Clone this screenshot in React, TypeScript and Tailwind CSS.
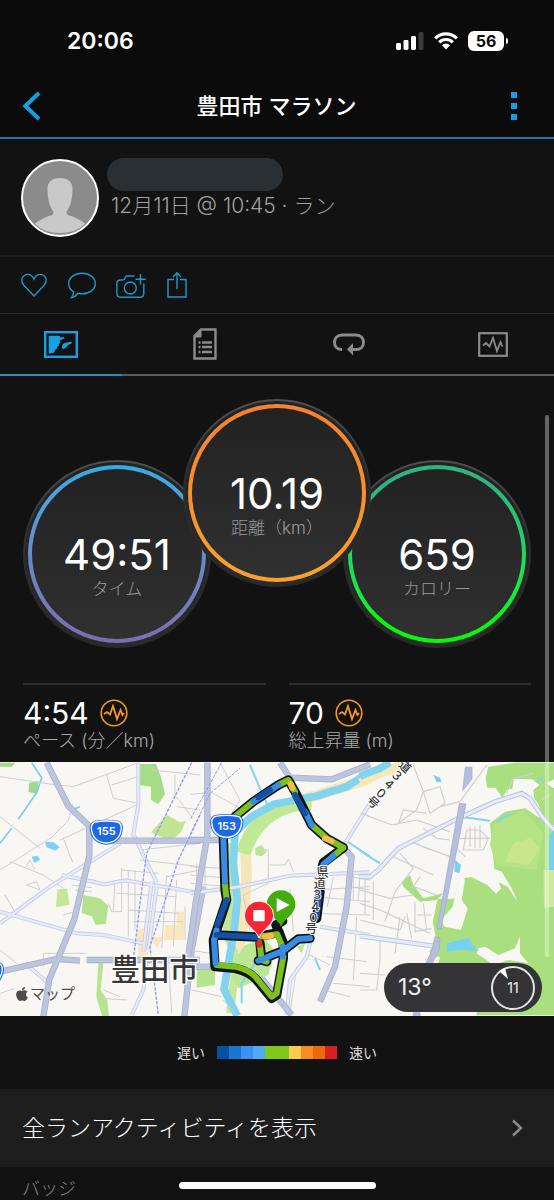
import React from 'react';
import { FaApple } from 'react-icons/fa';

const gauges = [
  {
    value: '49:51',
    label: 'タイム',
    place: 'self-end',
    ring: 'bg-linear-to-b from-[#35aae2] to-[#7d6cb0]',
  },
  {
    value: '10.19',
    label: '距離（km）',
    place: 'z-10 -mx-7 self-start',
    ring: 'bg-linear-to-b from-[#f5812e] to-[#f9a12c]',
  },
  {
    value: '659',
    label: 'カロリー',
    place: 'self-end',
    ring: 'bg-linear-to-b from-[#2fb380] from-10% to-[#0cf50c] to-85%',
  },
];

const stats = [
  { value: '4:54', label: 'ペース (分／km)' },
  { value: '70', label: '総上昇量 (m)' },
];

const paceColors = [
  'bg-[#0450a4]',
  'bg-[#1b76d3]',
  'bg-[#3b92f3]',
  'bg-[#55a9fb]',
  'bg-[#80c91c]',
  'bg-[#80c91c]',
  'bg-[#fdca4b]',
  'bg-[#fb8a22]',
  'bg-[#eb680b]',
  'bg-[#d82020]',
];

function StatusBar() {
  return (
    <div className="flex h-[82px] items-center justify-between pr-[46px] pl-[67px]">
      <span className="text-[23px] leading-8 font-semibold">20:06</span>
      <div className="flex items-center gap-[10px]">
        <svg width="28" height="18" viewBox="0 0 28 18" fill="#fff" aria-hidden="true">
          <rect x="0" y="11" width="5" height="7" rx="1.4" />
          <rect x="7.5" y="8" width="5" height="10" rx="1.4" />
          <rect x="15" y="4" width="5" height="14" rx="1.4" />
          <rect x="22.5" y="0" width="5" height="18" rx="1.4" fill="#3c3c3e" />
        </svg>
        <svg width="24" height="18" viewBox="0 0 24 18" fill="none" stroke="#fff" aria-hidden="true">
          <path d="M1.2 6.3a15.4 15.4 0 0 1 21.6 0" strokeWidth="3.2" />
          <path d="M5.2 10.3a9.7 9.7 0 0 1 13.6 0" strokeWidth="3.2" />
          <path d="M8 13.2a5.7 5.7 0 0 1 8 0L12 17.5Z" fill="#fff" stroke="none" />
        </svg>
        <div className="flex items-center gap-[2px]">
          <span className="flex h-5 w-9 items-center justify-center rounded-md bg-white text-base leading-5 font-bold text-[#0c0c0c]">
            56
          </span>
          <span className="h-[6px] w-[2px] rounded-r-full bg-white"></span>
        </div>
      </div>
    </div>
  );
}

function Header() {
  return (
    <header className="border-b-2 border-[#22789f] bg-[#0b0b0b]">
      <StatusBar />
      <div className="mb-[7px] flex h-12 items-center justify-between pr-[36px] pl-[22px]">
        <button type="button" aria-label="戻る" className="w-5">
          <svg width="19" height="30" viewBox="0 0 19 30" fill="none" stroke="#149fe4" strokeWidth="4">
            <path d="M17 2 3.4 15 17 28" />
          </svg>
        </button>
        <h1 className="text-[22px] leading-8 font-medium">豊田市 マラソン</h1>
        <button type="button" aria-label="メニュー" className="flex w-[7px] flex-col gap-[5px]">
          <span className="h-[6px] w-[6px] bg-[#149fe4]"></span>
          <span className="h-[6px] w-[6px] bg-[#149fe4]"></span>
          <span className="h-[6px] w-[6px] bg-[#149fe4]"></span>
        </button>
      </div>
    </header>
  );
}

function Profile() {
  return (
    <section className="flex gap-2 border-b-2 border-[#1e1e1e] pt-5 pb-[18px] pl-[21px]">
      <svg width="78" height="78" viewBox="0 0 78 78" role="img" aria-label="プロフィール写真">
        <defs>
          <clipPath id="avatar">
            <circle cx="39" cy="39" r="36.5" />
          </clipPath>
        </defs>
        <circle cx="39" cy="39" r="38" fill="#8b8b8b" stroke="#fff" strokeWidth="2" />
        <g clipPath="url(#avatar)" fill="#c9c9c9">
          <path d="M39 19c8.500 0 12.500 4 12.500 11 0 10-2 17-5.500 22-.8 1.500-.6 3 1 4 6 2 12 4.500 17 8.500-6 6.500-14 9.500-25 9.500s-19-3-25-9.500c5-4 11-6.500 17-8.500 1.600-1 1.800-2.500 1-4-3.500-5-5.500-12-5.500-22 0-7 4-11 12.500-11Z" />
        </g>
      </svg>
      <div className="-mt-px flex flex-col">
        <div className="h-[33px] w-[176px] rounded-full bg-[#2a2f34]"></div>
        <p className="pt-[3px] pl-1 text-[21px] leading-6 font-light text-[#a0a0a0]">
          12月11日 @ 10:45 · ラン
        </p>
      </div>
    </section>
  );
}

function SocialActions() {
  return (
    <div className="-mt-px flex h-[58px] items-center gap-5 border-b border-[#292929] px-5">
      <button type="button" aria-label="いいね">
        <svg width="28" height="28" viewBox="0 0 28 28" fill="none" stroke="#2196cf" strokeWidth="1.4">
          <path d="M14 25 4 14.5C.5 10.500 1.500 6 4.500 4.300 8.500 2.200 12.500 4 14 8c1.500-4 5.500-5.800 9.500-3.700 3 1.700 4 6.200.5 10.200Z" />
        </svg>
      </button>
      <button type="button" aria-label="コメント">
        <svg width="28" height="28" viewBox="0 0 28 28" fill="none" stroke="#2196cf" strokeWidth="1.4">
          <path d="M14 2.200c7.500 0 13.300 4.500 13.300 10.300S21.500 22.800 14 22.800c-1.500 0-3-.2-4.300-.5-1.200 2-3.400 3.900-6.200 4.300 1.500-1.600 2.200-3.500 2.100-5.800C2.500 19 .7 16 .7 12.500.7 6.700 6.500 2.200 14 2.200Z" />
        </svg>
      </button>
      <button type="button" aria-label="写真を追加">
        <svg width="30" height="28" viewBox="0 0 30 28" fill="none" stroke="#2196cf" strokeWidth="1.400">
          <path d="M18.500 5H11.500c-1.500 0-2.200.8-2.500 2.200C8.700 8.600 8 9 6.500 9H4.500C2.200 9 .9 10.300.9 12.500v10c0 2.600 1.200 3.700 3.600 3.700h19.700c2.400 0 3.600-1.100 3.600-3.700v-10" />
          <circle cx="14.300" cy="17" r="6" />
          <path d="M24.500 3v10.500M19.500 8.200h10.300" />
        </svg>
      </button>
      <button type="button" aria-label="共有">
        <svg width="22" height="28" viewBox="0 0 22 28" fill="none" stroke="#2196cf" strokeWidth="1.400">
          <path d="M8 8.500H2v17.500h18V8.500h-6" />
          <path d="M11 18V2M7 6l4-4.200L15 6" />
        </svg>
      </button>
    </div>
  );
}

function Tabs() {
  return (
    <nav className="flex h-[62px] justify-between border-b-2 border-[#5c5c5c]">
      <a
        href="#map"
        aria-label="マップ"
        className="-mb-[2px] flex w-[22%] items-center justify-center border-b-2 border-[#2b8fbd]"
      >
        <svg width="34" height="27" viewBox="0 0 34 27" fill="none">
          <rect x="1.200" y="1.200" width="31.600" height="24.600" stroke="#18a0e3" strokeWidth="2.400" />
          <path
            d="M4.700 4.700H15l1.500 1.500H20l.5 1.300L16 9.300l-.5 1 1 1.500-2 1.500.8 1.500-2.300 1 .3 1.500-2 1.500-1 2.500L8.800 22.300H4.700Z"
            fill="#18a0e3"
          />
          <path
            d="M18 16.500c0-2.500 1-4 3-4.500 2-.4 4-1.500 6-1.300 1.300.3 1.200 1.600 0 2l-2.500 1c-1.500.7-2 2.500-3.500 3.600-1.500 1-3 .8-3-.8Z"
            fill="#18a0e3"
          />
        </svg>
      </a>
      <a href="#details" aria-label="詳細" className="flex w-[22%] items-center justify-center">
        <svg width="24" height="32" viewBox="0 0 24 32" fill="none" stroke="#8b8b8b">
          <path d="M8 1.500h14.500v29h-21V8Z" strokeWidth="2.400" />
          <path d="M8 1.500v7.500H1.500Z" fill="#8b8b8b" />
          <path d="M5.500 14.500h2M5.500 19h2M5.500 24h2M9 14.500h10M9 19h10M9 24h10" strokeWidth="2.400" />
        </svg>
      </a>
      <a href="#laps" aria-label="ラップ" className="flex w-[22%] items-center justify-center">
        <svg width="32" height="23" viewBox="0 0 32 23" fill="none">
          <path
            d="M9 16.500C4.500 16.500 1.500 14 1.500 9.500S4.500 2 9 2h14c4.500 0 7.500 3 7.500 7.500s-3 7-7.500 7h-4"
            stroke="#8b8b8b"
            strokeWidth="3"
          />
          <path d="M14 16.300 20 10v12.500Z" fill="#8b8b8b" />
        </svg>
      </a>
      <a href="#charts" aria-label="チャート" className="flex w-[22%] items-center justify-center">
        <svg width="30" height="25" viewBox="0 0 30 25" fill="none" stroke="#8b8b8b">
          <rect x="1.200" y="1.200" width="27.600" height="22.600" strokeWidth="2.200" />
          <path d="m5 13.500 3-2.500 3.500 3.500L15 6l4 13 3.500-9 2 4.500" strokeWidth="1.800" />
        </svg>
      </a>
    </nav>
  );
}

function Gauges() {
  return (
    <section className="flex h-[272px] justify-center pt-[23px]">
      {gauges.map((gauge) => (
        <div
          key={gauge.label}
          className={`h-[188px] w-[188px] shrink-0 rounded-full bg-linear-to-b from-[#505050] via-[#2f2f2f] via-40% to-[#282828] p-[2px] ${gauge.place}`}
        >
          <div className="h-full rounded-full bg-linear-to-b from-[#202224] to-[#2b2b2b] p-[3px]">
            <div className={`h-full rounded-full p-[4px] ${gauge.ring}`}>
              <div className="flex h-full flex-col items-center justify-center rounded-full bg-linear-to-b from-[#222222] to-[#303030] pt-[26px]">
                <span className="text-[42px] leading-[44px]">{gauge.value}</span>
                <span className="text-[17px] leading-6 font-light text-[#999999]">{gauge.label}</span>
              </div>
            </div>
          </div>
        </div>
      ))}
    </section>
  );
}

function Stats() {
  return (
    <section className="grid grid-cols-2 gap-[23px] px-[23px] pt-[35px]">
      {stats.map((stat) => (
        <div key={stat.label} className="border-t-2 border-[#2e2e2e] pt-3 pb-[9px]">
          <div className="flex items-center gap-[11px]">
            <span className="text-[30px] leading-8">{stat.value}</span>
            <svg width="28" height="28" viewBox="0 0 28 28" fill="none" stroke="#f8991d" aria-hidden="true">
              <circle cx="14" cy="14" r="12.800" strokeWidth="1.600" />
              <path d="m4 15 3-2 3 2.500L13 7l4 13 3.500-9 2 5 1.500-2" strokeWidth="1.800" />
            </svg>
          </div>
          <p className="text-[18px] leading-6 font-light text-[#a8a8a8]">{stat.label}</p>
        </div>
      ))}
    </section>
  );
}

function Shield({ x, y, label }: { x: number; y: number; label: string }) {
  return (
    <g transform={`translate(${x} ${y})`}>
      <path d="M-36-34Q0-40 36-34Q50-28 50-12C48 18 32 36 0 38C-32 36-48 18-50-12Q-50-28-36-34Z" fill="#1f67e0" />
      <path
        d="M-34-30Q0-36 34-30Q45-26 45-12C43 14 30 31 0 33C-30 31-43 14-45-12Q-45-26-34-30Z"
        fill="#1d68e4"
        stroke="#fff"
        strokeWidth="4"
      />
      <text y="10" textAnchor="middle" fill="#fff" fontSize="33" fontWeight="600">
        {label}
      </text>
    </g>
  );
}

// Drawn at three units per pixel, in three side-by-side tiles.
function RouteMap() {
  return (
    <svg
      viewBox="0 0 1662 762"
      preserveAspectRatio="xMidYMid slice"
      className="block h-[254px] w-full"
      role="img"
      aria-label="豊田市のルート"
    >
      <rect width="1662" height="762" fill="#f8f7f3" />

      {/* west */}
      <g transform="translate(0 -6)" fill="none">
        <path d="M418 12h50l15 40 12 50-20 30-22-12V80l-35-5Z" fill="#a5dc85" />
        <path d="m500 165 40 22 18-5-15 35-30 25-60-25Z" fill="#bfe592" />
        <path d="m172 388 30-2 6 48-40 8Z" fill="#c6e896" />
        <path d="m250 405 50 10 25 22-8 55-30 2-12-25-30-10Z" fill="#b4e18d" />
        <path d="m295 605 15 5-8 80 20 30 5 50h-20l-18-60Z" fill="#b7e58f" />
        <path d="M0 8h45l-10 12H0ZM88 68l28-5-6 38-25-5Z" fill="#9fd98b" />
        <path d="M495 495h35v-40h22v85h-60ZM410 510l35-10v90h-30ZM450 530h40l-20 35Z" fill="#fbe6bd" />
        <path d="m135 245 25 2 20 15-15 10-25-10ZM95 290l18-3 8 12-18 10Z" fill="#7fd2f5" />
        <path d="m95 8 30 45-15 45-55 80M0 250l35-45M215 150l25-10" stroke="#78cdee" strokeWidth="5" />
        <g stroke="#cfcfd1" strokeWidth="3">
          <path d="M0 50 150 72 220 80l190-70M320 45l20 70 75 15M335 75l80-25M0 170l120 95M0 330l155-98 50-50 12-50M190 235l28 72M410 135 180 240M30 305l100 40 60 40M75 325l15-25 15 30M80 375l30-10 10 25-40-15M130 620v-40h130M0 570l50 40M15 405l35 60M365 325v130h-30l-10-25M385 330v200M405 330v180M345 365l-5 90M365 330l110 10M350 400l180 10M385 450l150 10M400 485h150M500 345l-15 220M530 360l-10 200M555 440v100M455 30l145 15M525 45v60l50 65M530 140l70 10M420 270l180-20M420 300l180 20M500 350l100-20M225 350l65 12M215 375l60 8M225 390l50 6M190 465l35-10M310 690l50 20M300 715l80 5M0 700l45-15M505 600l10 160M550 590v60" />
        </g>
        <g stroke="#c4cbe3" strokeWidth="12">
          <path d="M0 490 150 380l210-130M415 8v125l-15 90 70 145M0 455l230 65 80 5 120 25M185 345l130 28 60-12 225 38M455 365l-25 210M470 380l-25 190M440 600l-10 90-35 75M75 610l65 55" />
          <path
            d="M0 490 150 380l210-130M415 8v125l-15 90 70 145M0 455l230 65 80 5 120 25M185 345l130 28 60-12 225 38M455 365l-25 210M470 380l-25 190M440 600l-10 90-35 75M75 610l65 55"
            stroke="#e7eafa"
            strokeWidth="7"
          />
        </g>
        <g stroke="#a7b0ce" strokeWidth="19">
          <path d="m140 8 65 130 63 60v90l-45 190-75 180-18 112M330 242h270M0 635l170-38 70 5M260 600h340M610 380l-35 190-22 200" />
          <path
            d="m140 8 65 130 63 60v90l-45 190-75 180-18 112M330 242h270M0 635l170-38 70 5M260 600h340M610 380l-35 190-22 200"
            stroke="#bdc5de"
            strokeWidth="14"
          />
        </g>
        <path
          d="M575 8 440 280l-20 150-20 170M600 165 535 300 450 560l25 205"
          stroke="#8c9cf4"
          strokeWidth="4"
          strokeDasharray="10 4"
        />
      </g>

      {/* centre */}
      <g transform="translate(570 -6)" fill="none">
        <path d="M540 55 400 100l-120 35-80 55-35 60 5 90-10 150-40 220" stroke="#f6e7b8" strokeWidth="32" />
        <path d="M365 130c-80-5-170 35-205 150" stroke="#bfe995" strokeWidth="45" />
        <path d="m110 250 10 180-10 90 30 80-20 160" stroke="#c3e89c" strokeWidth="24" />
        <path d="m165 555 60-20 30 40-20 70-90 40-30-60Z" fill="#bbe694" />
        <path d="M20 625h55v50l-55 8Z" fill="#b5e58d" />
        <path d="m195 265 20-10 15 20-15 14-18-4ZM320 560l25-10-10 30Z" fill="#bbe694" />
        <path
          d="M540 35 470 80l-90 28-130 25-70 40-45 45-5 90 12 110-10 100-20 110-10 60 40 80"
          stroke="#82d4ee"
          strokeWidth="23"
        />
        <path d="m180 15 30 70 25 55M465 240l75 50M375 595l15 35M200 600l-45 70v60" stroke="#82d4ee" strokeWidth="6" />
        <g stroke="#cfcfd1" strokeWidth="3">
          <path d="M60 8v90l-60 5M60 95l90 50M90 8 150 120l-30 50M0 320l100 5M0 345l100 8M0 370l95 8M20 310v90M45 315v90M160 405l75-35v-100h-20M235 315h50l10-18 15 38M370 410l170 15M360 460l180 5M375 390l165-10M390 345l-15 95M410 350l-18 90M430 350l-18 90M480 350l60 10M480 380l60 10M490 340v80M510 340l-5 80M160 405l20 110M250 400v110M300 385l10 130M320 620l-20 140M350 580l70 35M410 590l120 15M500 470l-10 190M400 690l80 20M430 670l110 10M0 570l60 10M5 690l90 20M100 720l40 45" />
        </g>
        <path
          d="M0 400 150 380l150-33 240-10M390 500l150 25M370 510l-20 80-50 70-10 105M540 130l-75 120"
          stroke="#c4cbe3"
          strokeWidth="12"
        />
        <path
          d="M0 400 150 380l150-33 240-10M390 500l150 25M370 510l-20 80-50 70-10 105M540 130l-75 120"
          stroke="#e7eafa"
          strokeWidth="7"
        />
        <path
          d="M52 8v220l-35 200-25 180M0 240h100M270 8l30 45 125 5 115-45M455 255l30 35-15 150-35 180-45 105M215 655l90 110M0 620h80"
          stroke="#a7b0ce"
          strokeWidth="19"
        />
        <path
          d="M52 8v220l-35 200-25 180M0 240h100M270 8l30 45 125 5 115-45M455 255l30 35-15 150-35 180-45 105M215 655l90 110M0 620h80"
          stroke="#bdc5de"
          strokeWidth="14"
        />
        <path d="M0 225 60 100l90-75M95 8 0 180" stroke="#8c9cf4" strokeWidth="3" strokeDasharray="10 4" />
      </g>

      {/* east */}
      <g transform="translate(1080 -6)" fill="none">
        <path d="m385 20 80-12h117v50l-40 20-25-20-55-2-5 30-15 2-15 25-20-30h-25l-5-30Z" fill="#a9df7e" />
        <path d="m520 90 30-25 32 20v110l-35 5-10-65-15-20Z" fill="#a9df7e" />
        <path
          d="m390 190 45-35 60-10 45 30 42 30v561H200l-5-30 25-120-12-45 25-15-15-70 15-70h50l15-60 35-5 50 25 25 25 15-15-20-60Z"
          fill="#a9df7e"
        />
        <path d="M180 590h60l-10 40 120 100v40H180Z" fill="#f8f7f3" />
        <path d="m400 195 90-45 60 70-20 110-120-15-20-60Z" fill="#b6e383" />
        <path d="m460 250 50-15 30 30-35 50-70-10Z" fill="#cbe58a" />
        <path d="m125 365 25-20 10 30 30 40 60-15-20 20-50 5-50-45Z" fill="#a9df7e" />
        <path
          d="m300 340 15 20-10 60 18 25-20 65-50-10-10-20 35-40ZM305 295l60-15 20 40 40 15 30 50 18 40-30-45-40-20-70-60ZM355 565l20-5 40 25 50-20 15-35v50l25 30-60-10-45 15-50-35Z"
          fill="#f8f7f3"
        />
        <path
          d="m260 550 30-8 35-8 15 25 15 15-45-5-50 5ZM285 300l18 15-5 25-15-5ZM568 225l14-15v120l-16 5ZM220 45l20 8 5 12-15 2Z"
          fill="#77d0ef"
        />
        <path d="M550 330h32v110l-30 5Z" fill="#cde99a" />
        <path d="M0 68 60 40l90-32" stroke="#f6e7b8" strokeWidth="26" />
        <path d="M0 48 60 25l30-18" stroke="#82d4ee" strokeWidth="22" />
        <path d="m310 172 80 10M410 188l22-18 20-8M530 65l20-12M0 272l60 38" stroke="#82d4ee" strokeWidth="6" />
        <g stroke="#cfcfd1" strokeWidth="3.500">
          <path d="M160 15l30 80 50-15 15 50-45 30-20-65-20 55-55 40 15-40 70 10M5 160l90 35 75-15 100 35M380 15l-80 110-60 15M190 205l40 30 40 5M150 245l120 45M170 250l40 20M100 290l120 55M120 280l40 45-55 70-30 90M180 350l-20 30 70 25M0 390l90 25 70-10M15 355v110M40 365v115M0 430l60 20 150 70M0 480l120 30 15-40M165 425v90l50-10M190 430l10 80M170 465h45M60 530v70l-10 90H0M120 470l-15 110M0 640l75 5M140 460l15 75M320 210h40l25 25-15 35h-60ZM330 200v60M345 200v65M360 195v70M300 235h90M285 260l30 30M545 120l30-20M440 100l20-45 60-15" />
        </g>
        <path
          d="M0 350h30l25-20 60-65 170-85 120-55 80-25 25 15 40 60 32 35M0 528l235 32"
          stroke="#bcc5df"
          strokeWidth="15"
        />
        <path
          d="M0 350h30l25-20 60-65 170-85 120-55 80-25 25 15 40 60 32 35M0 528l235 32"
          stroke="#e7eafa"
          strokeWidth="9"
        />
        <path
          d="m298 130 20 2-75 375h-12ZM316 22h20v35l-28 35ZM225 530l15 3-2 35-30 60h-20l25-50ZM160 758h20v12h-20Z"
          fill="#b5bedb"
          stroke="#9da7c8"
          strokeWidth="2"
        />
      </g>

      {/* run, coloured by pace */}
      <g transform="translate(570 -6)" fill="none" strokeLinecap="round" strokeLinejoin="round">
        <path
          d="M135 170 190 125l75-50 30-15 20 35 50 100 45 40 50 28-60 45-5 20M390 395l-10 80M360 535l-35 2-45 35-75 30M100 230l5 160 5 30-30 90-10 30 5 80 60 5q45 10 65 35l45 55 15-10 20-110v-45l-22-55 20-12M80 525l120 6 68-14M210 550l5 50 15 5"
          stroke="#10151b"
          strokeWidth="28"
        />
        <g strokeWidth="18">
          <path
            d="M135 170 190 125M265 75l30-15 20 35M365 195l45 40 50 28-30 25M105 375l5 45M80 615l55 5q45 10 65 35l45 55 15-10 20-110M210 560l5 40 15 5M200 531l62-8 13 32"
            stroke="#7fc01f"
          />
          <path
            d="m190 125 75-50M345 155l20 40M430 288l-30 25v12M100 235l5 130M72 540l5 70M80 510l-6 25M205 602l75-30 45-35 35-2M278 590v-30"
            stroke="#398de0"
          />
          <path d="m205 112 35-22M315 105l30 55M110 420l-28 75M80 525l120 6M388 400l-8 70" stroke="#1250a3" />
          <path d="m302 72 5 12M405 235l20 8M225 530l18-3" stroke="#f3bd48" />
          <path d="M208 548v6" stroke="#e43325" />
        </g>
      </g>

      {/* start and finish pins */}
      <g transform="translate(570 -6)">
        <path d="M273 500c-8-22-43-37-43-66a42 42 0 0 1 86 0c0 29-35 44-43 66Z" fill="#43ad0e" />
        <path d="m260 414 39 21-39 21Z" fill="#fff" />
        <path
          d="M207 534c-8-25-44-38-44-67a44 44 0 0 1 88 0c0 29-36 42-44 67Z"
          fill="#f82634"
          stroke="#fff"
          strokeWidth="3"
        />
        <rect x="190" y="450" width="34" height="34" rx="3" fill="#fff" />
      </g>

      <Shield x={319} y={210} label="155" />
      <Shield x={680} y={193} label="153" />
      <Shield x={-38} y={634} label="" />

      <g fill="#38383a" stroke="#fff" strokeWidth="5" paintOrder="stroke" fontSize="36" fontWeight="500">
        <text x="950 941 934 928 922 916" y="344 378 412 446 480 513">
          県道３４０号
        </text>
        <g transform="rotate(42 1120 120)">
          <text x="1102 1102 1102 1102 1102" y="-10 26 62 98 134">
            道３４０号
          </text>
        </g>
      </g>
      <text x="332" y="654" fill="#38383a" stroke="#fff" strokeWidth="8" paintOrder="stroke" fontSize="88" fontWeight="500">
        豊田市
      </text>
    </svg>
  );
}

function MapPanel() {
  return (
    <section id="map" className="relative">
      <RouteMap />
      <div className="absolute bottom-[10px] left-[14px] flex items-center text-[#4b4b4d]">
        <FaApple size={16} />
        <span className="text-[15px] leading-6">マップ</span>
      </div>
      <div className="absolute right-3 bottom-1 flex h-[49px] w-[158px] items-center justify-between rounded-full bg-[#343436] pr-[7px] pl-[14px]">
        <span className="text-[23px] text-[#f2f2f2]">13°</span>
        <span className="relative flex h-11 w-11 items-center justify-center rounded-full border-2 border-[#e4e4e4] text-[14px] text-[#f2f2f2]">
          11
          <svg width="10" height="11" viewBox="0 0 10 11" className="absolute top-0 left-[6px]" aria-hidden="true">
            <path d="m0 3 6-3 3 11Z" fill="#fff" />
          </svg>
        </span>
      </div>
    </section>
  );
}

function PaceLegend() {
  return (
    <div className="flex h-[73px] items-center justify-center gap-3 text-[14px] text-[#dedede]">
      <span>遅い</span>
      <div className="flex">
        {paceColors.map((color, i) => (
          <span key={i} className={`h-[13px] w-3 ${color}`}></span>
        ))}
      </div>
      <span>速い</span>
    </div>
  );
}

export default function App() {
  return (
    <main
      lang="ja"
      className="relative min-h-screen overflow-hidden bg-[#121212] font-['Inter','Noto_Sans_CJK_JP',sans-serif] text-white"
    >
      <Header />
      <Profile />
      <SocialActions />
      <Tabs />
      <Gauges />
      <Stats />
      <MapPanel />
      <PaceLegend />
      <a href="#activities" className="flex h-[78px] items-center justify-between bg-[#1e1e1e] pr-[31px] pl-[22px]">
        <span className="text-[23px] font-light">全ランアクティビティを表示</span>
        <svg width="12" height="18" viewBox="0 0 12 18" fill="none" stroke="#8b8b8b" strokeWidth="2.500" aria-hidden="true">
          <path d="m2 1.500 8 7.500-8 7.500" />
        </svg>
      </a>
      <h2 className="pt-3 pl-[22px] text-[18px] leading-5 font-light text-[#858585]">バッジ</h2>

      <div className="absolute top-[415px] right-[5px] h-[542px] w-1 rounded-full bg-white/35"></div>
      <div className="absolute inset-x-0 bottom-[11px] flex justify-center">
        <div className="h-[7px] w-[197px] rounded-full bg-white"></div>
      </div>
    </main>
  );
}
